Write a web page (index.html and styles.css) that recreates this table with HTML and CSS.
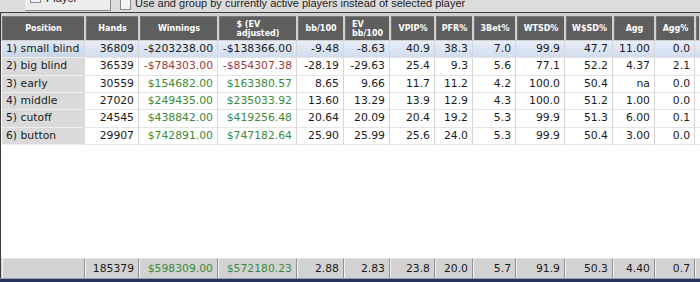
FILE: index.html
```html
<!DOCTYPE html>
<html>
<head>
<meta charset="utf-8">
<link rel="stylesheet" href="styles.css">
</head>
<body>
<div class="app">
  <div class="topbar">
    <div class="btn"><span class="cb"></span><span class="btn-label">Player</span></div>
    <span class="cb cb-main"></span>
    <span class="opt-label">Use and group by currently active players instead of selected player</span>
  </div>
  <div class="wrap">
    <div class="row head">
      <div class="hc"><span>Position</span></div>
      <div class="hc"><span>Hands</span></div>
      <div class="hc"><span>Winnings</span></div>
      <div class="hc two"><span>$ (EV<br>adjusted)</span></div>
      <div class="hc"><span>bb/100</span></div>
      <div class="hc two"><span>EV<br>bb/100</span></div>
      <div class="hc"><span>VPIP%</span></div>
      <div class="hc"><span>PFR%</span></div>
      <div class="hc"><span>3Bet%</span></div>
      <div class="hc"><span>WTSD%</span></div>
      <div class="hc"><span>W$SD%</span></div>
      <div class="hc"><span>Agg</span></div>
      <div class="hc"><span>Agg%</span></div>
      <div class="hc"><span></span></div>
    </div>
    <div class="row data sel">
      <div class="c pos">1) small blind</div><div class="c">36809</div><div class="c">-$203238.00</div><div class="c">-$138366.00</div><div class="c">-9.48</div><div class="c">-8.63</div><div class="c">40.9</div><div class="c">38.3</div><div class="c">7.0</div><div class="c">99.9</div><div class="c">47.7</div><div class="c">11.00</div><div class="c">0.0</div><div class="c end"></div>
    </div>
    <div class="row data">
      <div class="c pos">2) big blind</div><div class="c">36539</div><div class="c neg">-$784303.00</div><div class="c neg">-$854307.38</div><div class="c">-28.19</div><div class="c">-29.63</div><div class="c">25.4</div><div class="c">9.3</div><div class="c">5.6</div><div class="c">77.1</div><div class="c">52.2</div><div class="c">4.37</div><div class="c">2.1</div><div class="c end"></div>
    </div>
    <div class="row data">
      <div class="c pos">3) early</div><div class="c">30559</div><div class="c pos-m">$154682.00</div><div class="c pos-m">$163380.57</div><div class="c">8.65</div><div class="c">9.66</div><div class="c">11.7</div><div class="c">11.2</div><div class="c">4.2</div><div class="c">100.0</div><div class="c">50.4</div><div class="c">na</div><div class="c">0.0</div><div class="c end"></div>
    </div>
    <div class="row data">
      <div class="c pos">4) middle</div><div class="c">27020</div><div class="c pos-m">$249435.00</div><div class="c pos-m">$235033.92</div><div class="c">13.60</div><div class="c">13.29</div><div class="c">13.9</div><div class="c">12.9</div><div class="c">4.3</div><div class="c">100.0</div><div class="c">51.2</div><div class="c">1.00</div><div class="c">0.0</div><div class="c end"></div>
    </div>
    <div class="row data">
      <div class="c pos">5) cutoff</div><div class="c">24545</div><div class="c pos-m">$438842.00</div><div class="c pos-m">$419256.48</div><div class="c">20.64</div><div class="c">20.09</div><div class="c">20.4</div><div class="c">19.2</div><div class="c">5.3</div><div class="c">99.9</div><div class="c">51.3</div><div class="c">6.00</div><div class="c">0.1</div><div class="c end"></div>
    </div>
    <div class="row data">
      <div class="c pos">6) button</div><div class="c">29907</div><div class="c pos-m">$742891.00</div><div class="c pos-m">$747182.64</div><div class="c">25.90</div><div class="c">25.99</div><div class="c">25.6</div><div class="c">24.0</div><div class="c">5.3</div><div class="c">99.9</div><div class="c">50.4</div><div class="c">3.00</div><div class="c">0.0</div><div class="c end"></div>
    </div>
    <div class="spacer"></div>
    <div class="row foot">
      <div class="f"></div><div class="f">185379</div><div class="f pos-m">$598309.00</div><div class="f pos-m">$572180.23</div><div class="f">2.88</div><div class="f">2.83</div><div class="f">23.8</div><div class="f">20.0</div><div class="f">5.7</div><div class="f">91.9</div><div class="f">50.3</div><div class="f">4.40</div><div class="f">0.7</div><div class="f end"></div>
    </div>
  </div>
  <div class="bottombar"></div>
</div>
</body>
</html>
```

FILE: styles.css
```css
html, body {
  margin: 0;
  padding: 0;
  background: #d6d6d6;
}
body {
  width: 700px;
  height: 282px;
  overflow: hidden;
  font-family: "DejaVu Sans", Verdana, sans-serif;
}
.app {
  width: 700px;
  height: 282px;
  display: flex;
  flex-direction: column;
}
.topbar {
  height: 12px;
  flex: none;
  overflow: hidden;
  display: flex;
  align-items: flex-end;
  background: #dcdcdc;
  font-family: "Liberation Sans", Arial, sans-serif;
  font-size: 11px;
  color: #222;
}
.btn {
  margin-left: 25px;
  width: 86px;
  height: 22px;
  margin-bottom: 1px;
  background: #ececec;
  border-right: 1px solid #8a8a8a;
  border-bottom: 1px solid #8a8a8a;
  box-sizing: border-box;
  display: flex;
  align-items: flex-end;
  padding: 0 0 6px 5px;
  gap: 5px;
}
.btn-label {
  line-height: 11px;
}
.cb {
  display: inline-block;
  width: 9px;
  height: 9px;
  border: 1px solid #8a8a8a;
  background: #f4f4f4;
  flex: none;
}
.btn .cb {
  margin-bottom: 1px;
}
.cb-main {
  margin-left: 9px;
  margin-bottom: 2px;
}
.opt-label {
  margin-left: 4px;
  margin-bottom: 3px;
  line-height: 11px;
  white-space: nowrap;
}
.wrap {
  flex: 1;
  display: flex;
  flex-direction: column;
  border-top: 1px solid #3c3c3c;
  border-left: 1px solid #3c3c3c;
  padding: 3px 0 0 1px;
  background: #ffffff;
  min-height: 0;
}
.row {
  display: grid;
  grid-template-columns: 83px 54px 79px 79px 47px 46px 45px 38px 43px 49px 48px 42px 40px 1fr;
}
.head {
  height: 25px;
  background: #d0d0d0;
  margin: -3px 0 0 -1px;
  padding: 3px 0 0 1px;
  box-sizing: content-box;
}
.hc {
  margin: 0 1px 1px 1px;
  background: #5e5e5e;
  border-top: 1px solid #7a7a7a;
  border-left: 1px solid #747474;
  box-sizing: border-box;
  color: #ffffff;
  font-weight: bold;
  font-size: 8px;
  line-height: 9px;
  display: flex;
  align-items: center;
  justify-content: center;
  text-align: center;
}
.hc.two {
  text-align: left;
}
.head .hc:first-child {
  margin-left: 0;
}
.data {
  height: 17.33px;
  font-size: 10.8px;
  color: #1a1a1a;
}
.c {
  border-right: 1px solid #d6d6d6;
  border-bottom: 1px solid #e6e6e6;
  text-align: right;
  padding-right: 4px;
  line-height: 16px;
  white-space: nowrap;
  overflow: hidden;
}
.c.pos {
  text-align: left;
  padding-left: 4px;
  background: #dadada;
  border-bottom-color: #eeeeee;
}
.c.end {
  border-right: none;
}
.sel {
  background: linear-gradient(#e8eef8, #cfdcef);
}
.sel .c.pos {
  background: linear-gradient(#e0e7f2, #c9d5e7);
}
.neg {
  color: #a03a3a;
}
.pos-m {
  color: #3a8a3a;
}
.spacer {
  flex: 1;
  background: #ffffff;
}
.foot {
  height: 20px;
  margin-left: -1px;
  padding-left: 1px;
  background: #d2d2d2;
  font-size: 10.8px;
  color: #1a1a1a;
}
.f {
  border-right: 1px solid #8e8e8e;
  border-left: 1px solid #f2f2f2;
  border-top: 1px solid #e6e6e6;
  text-align: right;
  padding-right: 4px;
  line-height: 19px;
  white-space: nowrap;
}
.f.end {
  border-right: none;
}
.bottombar {
  height: 4px;
  flex: none;
  background: #27335c;
  border-top: 1px solid #9aa0b0;
  box-sizing: border-box;
}
```
